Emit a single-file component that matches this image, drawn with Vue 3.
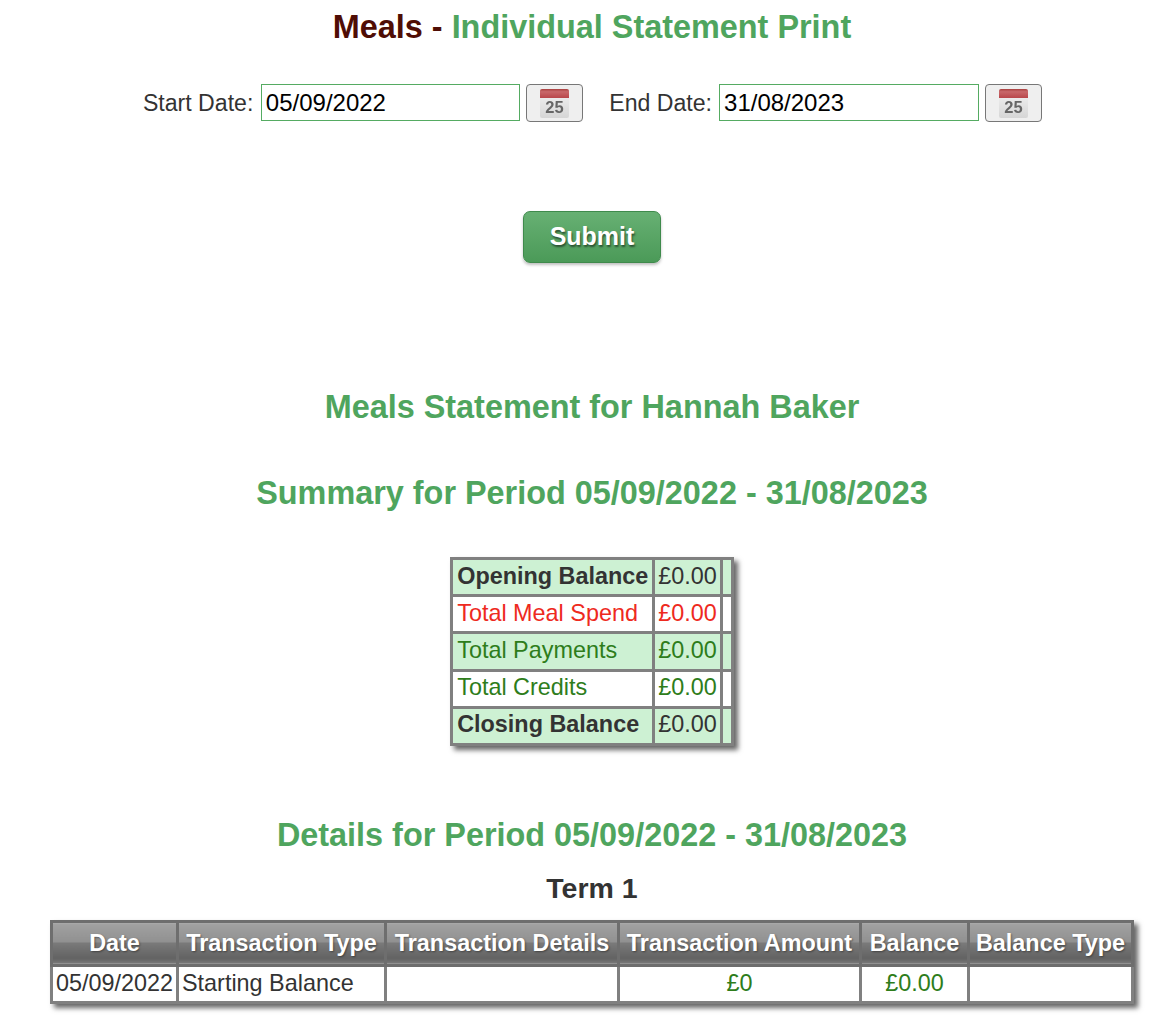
<template>
  <div class="page">
    <h1 class="title"><span class="brown">Meals - </span>Individual Statement Print</h1>

    <form class="date-row" @submit.prevent>
      <template v-for="field in dateFields" :key="field.id">
        <label class="date-label" :class="field.cls" :for="field.id">{{ field.label }}</label>
        <input :id="field.id" v-model="field.value" class="date-input" :class="field.cls" type="text" />
        <button class="cal-btn" type="button" :aria-label="field.label">
          <svg class="cal-icon" width="31" height="31" viewBox="0 0 31 31">
            <defs>
              <linearGradient :id="field.id + 'Red'" x1="0" y1="0" x2="0" y2="1">
                <stop offset="0" stop-color="#a8403f" />
                <stop offset="0.3" stop-color="#c8686a" />
                <stop offset="1" stop-color="#b9474b" />
              </linearGradient>
              <linearGradient :id="field.id + 'Body'" x1="0" y1="0" x2="0" y2="1">
                <stop offset="0" stop-color="#f4f4f4" />
                <stop offset="1" stop-color="#d6d6d6" />
              </linearGradient>
            </defs>
            <rect x="1" y="1" width="29" height="29" rx="2" :fill="`url(#${field.id}Body)`" />
            <path d="M1 10V3a2 2 0 0 1 2-2h25a2 2 0 0 1 2 2v7z" :fill="`url(#${field.id}Red)`" />
            <text x="15.500" y="25" text-anchor="middle" class="cal-num">25</text>
          </svg>
        </button>
      </template>
    </form>

    <div class="submit-wrap">
      <button class="submit-btn" type="submit">Submit</button>
    </div>

    <h2 class="heading name">Meals Statement for Hannah Baker</h2>
    <h2 class="heading period">Summary for Period 05/09/2022 - 31/08/2023</h2>

    <table class="grid summary">
      <tbody>
        <tr v-for="row in summaryRows" :key="row.label" :class="[row.cls, { shaded: row.shaded }]">
          <td>{{ row.label }}</td>
          <td class="amount">{{ row.value }}</td>
          <td class="spacer"></td>
        </tr>
      </tbody>
    </table>

    <h2 class="heading details">Details for Period 05/09/2022 - 31/08/2023</h2>
    <h3 class="term">Term 1</h3>

    <table class="grid detail">
      <thead>
        <tr>
          <th v-for="col in columns" :key="col">{{ col }}</th>
        </tr>
      </thead>
      <tbody>
        <tr>
          <td>05/09/2022</td>
          <td>Starting Balance</td>
          <td></td>
          <td class="money">£0</td>
          <td class="money">£0.00</td>
          <td></td>
        </tr>
      </tbody>
    </table>
  </div>
</template>

<script setup>
import { reactive } from 'vue';

const dateFields = reactive([
  { id: 'startDate', label: 'Start Date:', value: '05/09/2022', cls: 'start' },
  { id: 'endDate', label: 'End Date:', value: '31/08/2023', cls: 'end' }
]);

const summaryRows = [
  { label: 'Opening Balance', value: '£0.00', cls: 'strong', shaded: true },
  { label: 'Total Meal Spend', value: '£0.00', cls: 'spend', shaded: false },
  { label: 'Total Payments', value: '£0.00', cls: 'credit', shaded: true },
  { label: 'Total Credits', value: '£0.00', cls: 'credit', shaded: false },
  { label: 'Closing Balance', value: '£0.00', cls: 'strong', shaded: true }
];

const columns = ['Date', 'Transaction Type', 'Transaction Details', 'Transaction Amount', 'Balance', 'Balance Type'];
</script>

<style>
html, body {
  background: #fff;
}
</style>

<style scoped>
.page {
  padding-left: 24px;
  height: 1018px;
  overflow: hidden;
  box-sizing: border-box;
  font-family: "Liberation Sans", Arial, sans-serif;
  color: #333;
  text-align: center;
}

.title {
  margin: 0;
  padding-top: 8px;
  font-size: 32.400px;
  line-height: 38px;
  font-weight: bold;
  color: #4fa55e;
}

.brown {
  color: #4f0d05;
}

.date-row {
  display: flex;
  justify-content: center;
  align-items: flex-start;
  margin-top: 38px;
  padding-left: 1px;
  height: 38px;
}

.date-label {
  align-self: center;
  font-size: 23.100px;
  margin-right: 8px;
}

.date-label.end {
  margin-left: 26px;
  margin-right: 7px;
}

.date-input {
  width: 259px;
  height: 37px;
  box-sizing: border-box;
  border: 1px solid #55ab62;
  padding: 0 4px;
  font-family: inherit;
  font-size: 24px;
  color: #000;
  background: #fff;
  outline: none;
}

.date-input.start {
  padding-left: 3.500px;
}

.date-input.end {
  width: 260px;
}

.cal-btn {
  display: flex;
  align-items: center;
  justify-content: center;
  width: 57px;
  height: 38px;
  margin-left: 6px;
  padding: 0;
  box-sizing: border-box;
  border: 1px solid #777;
  border-radius: 4px;
  background: #efefef;
}

.cal-icon {
  filter: blur(0.3px);
}

.cal-num {
  font-family: "Liberation Sans", Arial, sans-serif;
  font-size: 16.500px;
  font-weight: bold;
  fill: #666;
  filter: blur(0.5px);
}

.submit-wrap {
  margin-top: 89px;
}

.submit-btn {
  width: 138px;
  height: 52px;
  padding: 0 0 2px;
  border: 1px solid #3f8a4c;
  border-radius: 7px;
  background: linear-gradient(#67b073, #4b9a58);
  box-shadow: 0 2px 3px rgba(0, 0, 0, 0.25);
  color: #fff;
  font-family: inherit;
  font-size: 25px;
  font-weight: bold;
  text-shadow: 1px 2px 2px rgba(0, 0, 0, 0.5);
}

.heading {
  margin: 0;
  font-size: 32.400px;
  line-height: 38px;
  font-weight: bold;
  color: #4fa55e;
}

.name {
  margin-top: 125px;
}

.period {
  margin-top: 48px;
}

.details {
  margin-top: 70px;
}

.term {
  margin: 17px 0 0;
  font-size: 28.500px;
  line-height: 34px;
  font-weight: bold;
  color: #333;
}

.grid {
  margin: 0 auto;
  border-collapse: collapse;
  border: 3px solid #808080;
  box-shadow: 4px 4px 5px rgba(0, 0, 0, 0.6);
  font-size: 23.400px;
  background: #fff;
}

.grid td,
.grid th {
  box-sizing: border-box;
  border: 3px solid #808080;
  padding: 0 4px 2px;
  height: 37.200px;
}

.summary {
  margin-top: 45px;
}

.summary td {
  text-align: left;
}

.summary .amount {
  padding-left: 3px;
  padding-right: 3px;
}

.shaded td {
  background: #cdf1d3;
}

.strong td:first-child {
  font-weight: bold;
}

.spend td {
  color: #ee2a1e;
}

.credit td {
  color: #2e7d1b;
}

.detail {
  width: 1084px;
  table-layout: fixed;
  margin-top: 15px;
  border-color: #707070;
}

.detail th {
  height: 44px;
  padding: 1px 0 0;
  border-color: #6e6e6e;
  color: #fff;
  font-weight: bold;
  white-space: nowrap;
  background: linear-gradient(#adadad 0, #a0a0a0 6%, #909090 49%, #7a7a7a 50%, #626262 88%, #7a7a7a 100%);
  text-shadow: 1px 1px 2px rgba(0, 0, 0, 0.4);
}

.detail th:nth-child(1) { width: 126px; }
.detail th:nth-child(2) { width: 208px; }
.detail th:nth-child(3) { width: 233px; }
.detail th:nth-child(4) { width: 242px; }
.detail th:nth-child(5) { width: 108px; }
.detail th:nth-child(6) { width: 164px; }

.detail td {
  text-align: left;
  padding: 0 3px 2px;
  white-space: nowrap;
}

.detail td.money {
  text-align: center;
  color: #2e7d1b;
}
</style>
